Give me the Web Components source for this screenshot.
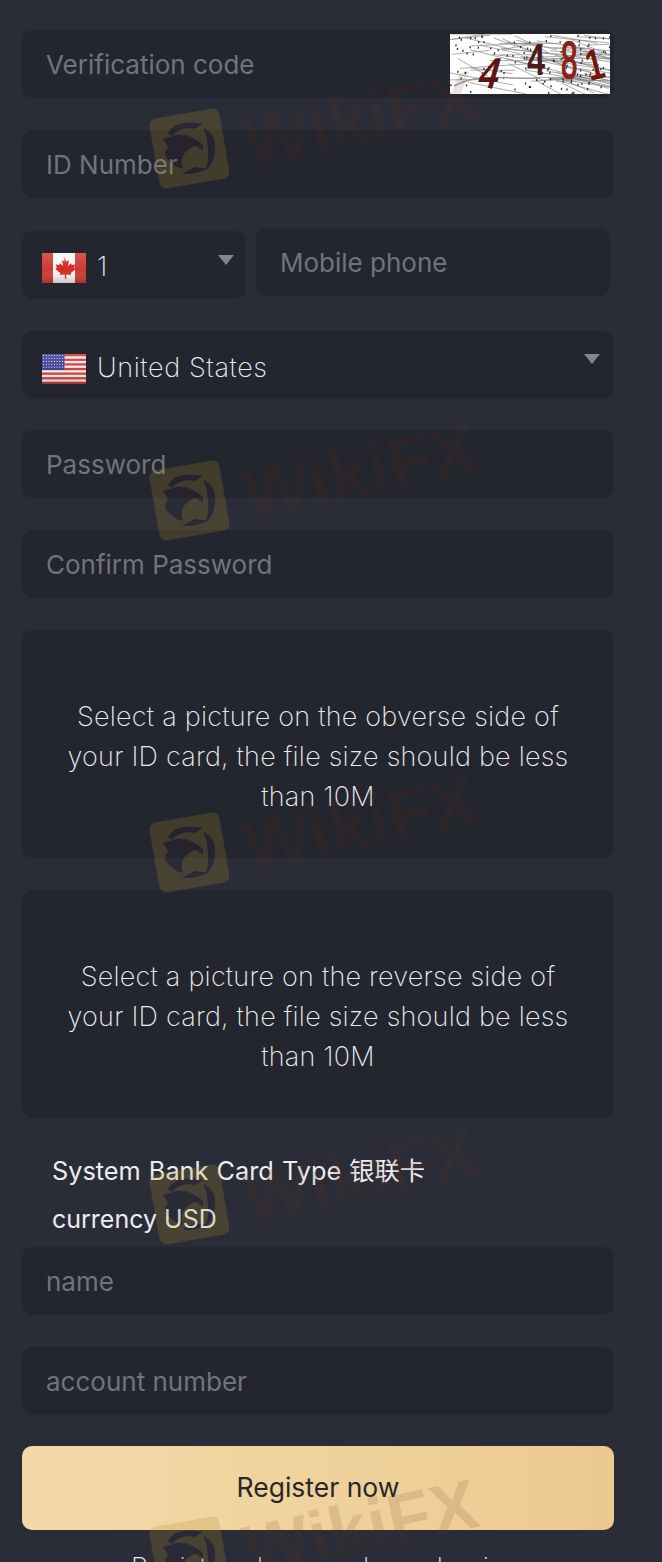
<!DOCTYPE html>
<html>
<head>
<meta charset="utf-8">
<style>
    html, body { margin: 0; padding: 0; background: #2a2d38; }
    body { height: 1562px; overflow: hidden; position: relative; font-family: Inter, "Noto Sans CJK SC", sans-serif; }
</style>
</head>
<body>
<wm-layer></wm-layer>
<register-form>
    <text-field placeholder="Verification code"><captcha-image slot="end"></captcha-image></text-field>
    <text-field placeholder="ID Number"></text-field>
    <div style="display:flex;gap:10px;height:68px">
        <code-select style="width:224px;margin-top:1px"></code-select>
        <text-field placeholder="Mobile phone" style="flex:1;margin-top:-2px;margin-right:4px"></text-field>
    </div>
    <country-select style="margin:1px 0 -1px"></country-select>
    <text-field placeholder="Password"></text-field>
    <text-field placeholder="Confirm Password"></text-field>
    <upload-box>Select a picture on the obverse side of your ID card, the file size should be less than 10M</upload-box>
    <upload-box>Select a picture on the reverse side of your ID card, the file size should be less than 10M</upload-box>
    <bank-info></bank-info>
    <text-field placeholder="name"></text-field>
    <text-field placeholder="account number"></text-field>
    <submit-button>Register now</submit-button>
</register-form>

<script>
const maple = `<path fill="#d62b24" d="M22 4l2.4 4.6 2.6-1.3-1 5.700 3-2.800.8 1.900 3.400-.6-1 3.600 1.500.8-5.200 4.300.6 1.900-4.900-.6v4.300h-1.400v-4.300l-4.900.6.6-1.900-5.200-4.300 1.500-.8-1-3.600 3.400.6.8-1.900 3 2.800-1-5.700 2.600 1.300z"/>`;

class CountryFlag extends HTMLElement
{
    connectedCallback()
    {
        this.attachShadow({ mode: 'open' });
        const code = this.getAttribute('code');
        let art = '';

        if (code === 'us')
        {
            const stripes = [];
            for (let i = 0; i < 7; i++)
            {
                stripes.push(`<rect y="${i * 4.62}" width="44" height="2.31" fill="#cf3d3a"/>`);
            }
            const stars = [];
            for (let r = 0; r < 5; r++)
            {
                for (let c = 0; c < 8; c++)
                {
                    stars.push(`<circle cx="${1.6 + c * 2.7}" cy="${1.6 + r * 2.9}" r=".6" fill="#d8d8f0"/>`);
                }
            }
            art = `<rect width="44" height="30" fill="#f6ecea"/>${stripes.join('')}<rect width="22.500" height="16" fill="#3c3f94"/>${stars.join('')}`;
        }
        else
        {
            art = `<rect width="44" height="30" fill="#f8f4f2"/><rect width="11" height="30" fill="#cf3a36"/><rect x="33" width="11" height="30" fill="#cf3a36"/>${maple}`;
        }

        this.shadowRoot.innerHTML = `
            <style>
                :host { display: block; width: 44px; height: 30px; margin-top: 4px; }
                svg { display: block; }
            </style>
            <svg width="44" height="30" viewBox="0 0 44 30">
                <defs>
                    <linearGradient id="gloss" x1="0" y1="0" x2="0" y2="1">
                        <stop offset="0" stop-color="#fff" stop-opacity=".14"/>
                        <stop offset=".55" stop-color="#fff" stop-opacity="0"/>
                        <stop offset="1" stop-color="#000" stop-opacity=".2"/>
                    </linearGradient>
                </defs>
                ${art}
                <rect width="44" height="30" fill="url(#gloss)"/>
            </svg>
        `;
    }
}

class TextField extends HTMLElement
{
    connectedCallback()
    {
        this.attachShadow({ mode: 'open' });
        this.shadowRoot.innerHTML = `
            <style>
                :host {
                    display: flex;
                    align-items: center;
                    justify-content: space-between;
                    height: 68px;
                    box-sizing: border-box;
                    padding: 0 4px 0 24px;
                    background: #23262f;
                    border-radius: 10px;
                    font-size: 26px;
                    color: #71747b;
                }
            </style>
            <span>${this.getAttribute('placeholder')}</span>
            <slot name="end"></slot>
        `;
    }
}

class CaptchaImage extends HTMLElement
{
    connectedCallback()
    {
        this.attachShadow({ mode: 'open' });

        // fixed seed so that the noise is the same on each load
        let seed = 7;
        const rnd = () => { seed = (seed * 16807) % 2147483647; return seed / 2147483647; };

        let noise = '';
        for (let i = 0; i < 80; i++)
        {
            const x = rnd() * 150 - 10, y = rnd() * 50;
            noise += `<line x1="${x}" y1="${y}" x2="${x + 30 + rnd() * 50}" y2="${y + rnd() * 26 - 6}" stroke="#8a8a8a" stroke-width="1" opacity=".7"/>`;
        }
        for (let i = 0; i < 120; i++)
        {
            noise += `<rect x="${rnd() * 160}" y="${rnd() * 60}" width="1.300" height="2" fill="#2a2a2a"/>`;
        }

        this.shadowRoot.innerHTML = `
            <style>
                :host { display: block; width: 160px; height: 60px; }
                svg { display: block; background: #fff; }
                text { font-family: "Liberation Sans", sans-serif; }
            </style>
            <svg width="160" height="60" viewBox="0 0 160 60">
                ${noise}
                <path d="M4 52C30 38 60 46 90 44" fill="none" stroke="#999" stroke-width="1.500"/>
                <text transform="translate(26 54) skewX(-16) scale(1.150 1.400)" font-size="31" font-weight="700" fill="#5e1512">4</text>
                <text transform="translate(77 41) scale(1.050 1.450)" font-size="31" font-weight="700" fill="#4b1a1c">4</text>
                <text transform="translate(111 44) scale(.95 1.700)" font-size="31" fill="#8e2017" stroke="#8e2017">8</text>
                <text transform="translate(140 47) rotate(-14) scale(1 1.400)" font-size="31" font-weight="700" fill="#701510">1</text>
            </svg>
        `;
    }
}

class CodeSelect extends HTMLElement
{
    connectedCallback()
    {
        this.attachShadow({ mode: 'open' });
        this.shadowRoot.innerHTML = `
            <style>
                :host {
                    display: flex;
                    align-items: center;
                    gap: 11px;
                    height: 68px;
                    box-sizing: border-box;
                    padding: 2px 0 0 20px;
                    position: relative;
                    background: #23262f;
                    border-radius: 10px;
                    font-size: 27px;
                    font-weight: 200;
                    color: #eaebee;
                }
                i {
                    position: absolute;
                    right: 12px;
                    top: 24px;
                    border: 8px solid transparent;
                    border-top: 10px solid #85868a;
                    border-bottom: 0;
                }
            </style>
            <country-flag code="ca"></country-flag>
            <span>1</span>
            <i></i>
        `;
    }
}

class CountrySelect extends HTMLElement
{
    connectedCallback()
    {
        this.attachShadow({ mode: 'open' });
        this.shadowRoot.innerHTML = `
            <style>
                :host {
                    display: flex;
                    align-items: center;
                    gap: 11px;
                    height: 68px;
                    box-sizing: border-box;
                    padding: 4px 0 0 20px;
                    position: relative;
                    background: #23262f;
                    border-radius: 10px;
                    font-size: 27px;
                    font-weight: 200;
                    letter-spacing: .6px;
                    color: #eaebee;
                }
                i {
                    position: absolute;
                    right: 14px;
                    top: 23px;
                    border: 8px solid transparent;
                    border-top: 10px solid #85868a;
                    border-bottom: 0;
                }
            </style>
            <country-flag code="us"></country-flag>
            <span>United States</span>
            <i></i>
        `;
    }
}

class UploadBox extends HTMLElement
{
    connectedCallback()
    {
        this.attachShadow({ mode: 'open' });
        this.shadowRoot.innerHTML = `
            <style>
                :host {
                    display: flex;
                    align-items: center;
                    height: 228px;
                    box-sizing: border-box;
                    padding: 26px 40px 0;
                    background: #23262f;
                    border-radius: 10px;
                    text-align: center;
                    font-size: 27px;
                    font-weight: 200;
                    letter-spacing: .22px;
                    line-height: 40px;
                    color: #eaebee;
                }
            </style>
            <slot></slot>
        `;
    }
}

class BankInfo extends HTMLElement
{
    connectedCallback()
    {
        this.attachShadow({ mode: 'open' });
        this.shadowRoot.innerHTML = `
            <style>
                :host {
                    display: block;
                    margin: -3px 0 -28px;
                    padding-left: 30px;
                    font-size: 25.300px;
                    line-height: 48px;
                    color: #eceded;
                }
                .type { word-spacing: 1px; }
                .currency { font-size: 25px; }
            </style>
            <div class="type">System Bank Card Type 银联卡</div>
            <div class="currency">currency USD</div>
        `;
    }
}

class SubmitButton extends HTMLElement
{
    connectedCallback()
    {
        this.attachShadow({ mode: 'open' });
        this.shadowRoot.innerHTML = `
            <style>
                :host {
                    display: flex;
                    align-items: center;
                    justify-content: center;
                    height: 84px;
                    margin-top: -1px;
                    padding-bottom: 2px;
                    box-sizing: border-box;
                    background: linear-gradient(90deg, #f4d9a8, #ebca90);
                    border-radius: 10px;
                    font-size: 26.500px;
                    color: #26272b;
                }
            </style>
            <slot></slot>
        `;
    }
}

class RegisterForm extends HTMLElement
{
    connectedCallback()
    {
        this.attachShadow({ mode: 'open' });
        this.shadowRoot.innerHTML = `
            <style>
                :host {
                    display: flex;
                    flex-direction: column;
                    gap: 32px;
                    width: 592px;
                    margin-left: 22px;
                    padding-top: 30px;
                }
                p {
                    margin: -11px 0 0;
                    text-align: center;
                    font-size: 27px;
                    font-weight: 200;
                    letter-spacing: .12px;
                    color: #eaebee;
                }
            </style>
            <slot></slot>
            <p>Registered users please log in</p>
        `;
    }
}

class WmLayer extends HTMLElement
{
    connectedCallback()
    {
        this.attachShadow({ mode: 'open' });

        const eagle = 'M20 26C25 17 37 13 55 17L47 22C38 20 30 22 24 29ZM55 21C63 24 68 32 67 42C67 51 63 59 57 64C60 57 61 50 60 44C60 35 58 27 55 21ZM35 66C41 68 50 67 59 61C54 61 50 61 47 60C43 62 39 64 35 66ZM15 32L29 28C36 27 47 30 55 38L55 44C52 41 50 39 47 39C42 40 36 45 34 51C33 55 34 59 35 62C30 61 27 59 25 57C20 53 17 50 17 46L20 40Z';

        const marks = [];
        for (let i = 0; i < 5; i++)
        {
            marks.push(`
                <div class="mark" style="top:${88 + i * 352}px">
                    <svg width="90" height="90" viewBox="0 0 90 90">
                        <defs>
                            <mask id="cut">
                                <rect width="90" height="90" fill="#fff"/>
                                <path fill="#000" d="${eagle}"/>
                            </mask>
                        </defs>
                        <g mask="url(#cut)">
                            <rect x="6" y="6" width="71" height="71" rx="7" transform="rotate(-10 42 42)" fill="rgba(176,140,40,.22)"/>
                        </g>
                        <path fill="rgba(40,20,40,.14)" d="${eagle}"/>
                    </svg>
                    <span>WikiFX</span>
                </div>
            `);
        }

        this.shadowRoot.innerHTML = `
            <style>
                :host {
                    position: absolute;
                    inset: 0;
                    z-index: 2;
                    overflow: hidden;
                    pointer-events: none;
                }
                .mark {
                    position: absolute;
                    left: 148px;
                    display: flex;
                    align-items: flex-start;
                }
                .mark svg { margin-top: 19px; }
                span {
                    margin: 20px 0 0 6px;
                    font-family: "Liberation Sans", sans-serif;
                    font-weight: 700;
                    font-size: 70px;
                    line-height: 72px;
                    letter-spacing: 1px;
                    color: rgba(110, 40, 20, .13);
                    transform: rotate(-12deg);
                    transform-origin: left center;
                }
            </style>
            ${marks.join('')}
        `;
    }
}

customElements.define('country-flag', CountryFlag);
customElements.define('text-field', TextField);
customElements.define('captcha-image', CaptchaImage);
customElements.define('code-select', CodeSelect);
customElements.define('country-select', CountrySelect);
customElements.define('upload-box', UploadBox);
customElements.define('bank-info', BankInfo);
customElements.define('submit-button', SubmitButton);
customElements.define('register-form', RegisterForm);
customElements.define('wm-layer', WmLayer);
</script>
</body>
</html>
